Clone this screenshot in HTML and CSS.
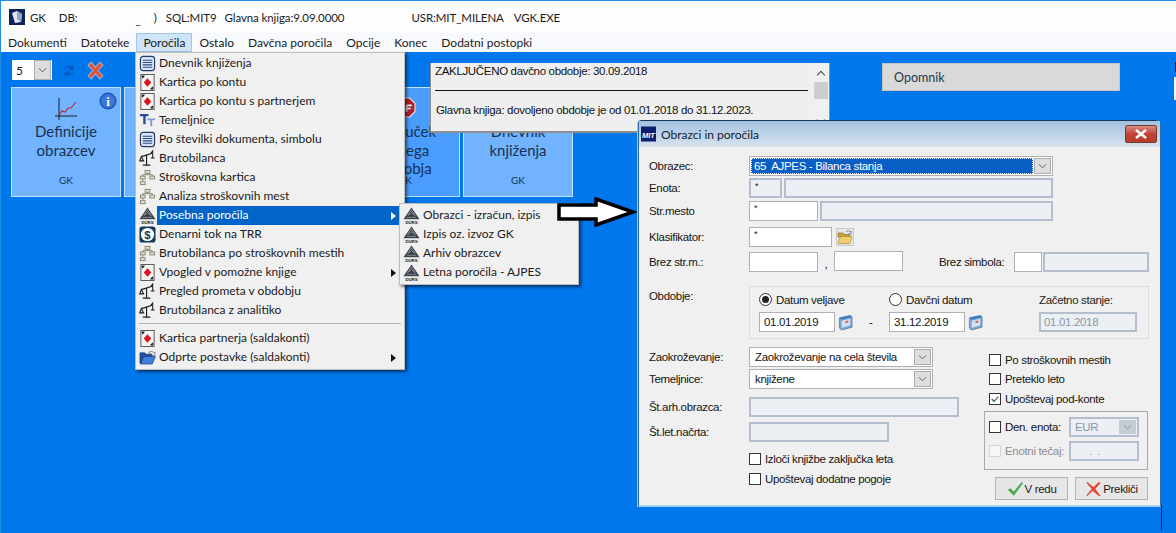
FILE: index.html
```html
<!DOCTYPE html>
<html lang="sl">
<head>
<meta charset="utf-8">
<title>GK</title>
<link rel="stylesheet" href="styles.css">
</head>
<body>
<svg class="defs" width="0" height="0" aria-hidden="true">
  <symbol id="i-list" viewBox="0 0 18 18">
    <rect x="1.5" y="1.5" width="15" height="15" rx="3" fill="#d8e4f4" stroke="#243a66" stroke-width="1.2"/>
    <path d="M4 5.5h10M4 8h10M4 10.5h10M4 13h10" stroke="#2a4b86" stroke-width="1.2"/>
  </symbol>
  <symbol id="i-card" viewBox="0 0 18 18">
    <rect x="2" y="0.5" width="14" height="17" fill="#f4f4f0" stroke="#555"/>
    <path d="M9 4.5l4 4.5-4 4.5-4-4.5z" fill="#e01020"/>
    <path d="M3 1.5h3v1L4 4.5H3zM15 16.500h-3v-1l2-2h1z" fill="#222"/>
  </symbol>
  <symbol id="i-tt" viewBox="0 0 18 18">
    <path d="M1 2h9v2.500H7V13H4.500V4.500H1z" fill="#2b4a9a"/>
    <path d="M9 7h8v1.800h-3V15h-2V8.800H9z" fill="#7d9cd0"/>
  </symbol>
  <symbol id="i-scale" viewBox="0 0 18 18">
    <path d="M4 16h8M8 16V5M2.500 7L14 3.500M2.500 7L0.800 11.500h4L2.500 7z" fill="none" stroke="#1c1c1c" stroke-width="1.200"/>
    <path d="M12.500 3.500L14.500 1v7M12.500 8.500h4" fill="none" stroke="#1c1c1c" stroke-width="1.100"/>
  </symbol>
  <symbol id="i-tree" viewBox="0 0 18 18">
    <g fill="#e6e6d6" stroke="#85856e">
      <rect x="6.500" y="1.500" width="5" height="3"/>
      <rect x="11.500" y="7.500" width="5" height="3"/>
      <rect x="1.500" y="7.500" width="5" height="3"/>
      <rect x="1.500" y="13.500" width="5" height="3"/>
    </g>
    <path d="M9 4.500V6M4 6h10v1.500M4 6v1.500M4 10.500v3" fill="none" stroke="#85856e"/>
  </symbol>
  <symbol id="i-durs" viewBox="0 0 18 18">
    <path d="M9 0.500L17.500 13H.500z" fill="#3a4048"/>
    <path d="M9 3l-4 6 4-3 4 3zM4 11h10" fill="none" stroke="#9aa0a8" stroke-width=".8"/>
    <rect x="0" y="13.500" width="18" height="4.500" fill="#e8e8e8"/>
    <text x="9" y="17.600" text-anchor="middle" class="durs">DURS</text>
  </symbol>
  <symbol id="i-dollar" viewBox="0 0 18 18">
    <rect x="0.500" y="0.500" width="17" height="17" rx="3" fill="#173a5c"/>
    <circle cx="9" cy="9" r="7" fill="#fff"/>
    <text x="9" y="13.500" text-anchor="middle" class="dollar">$</text>
  </symbol>
  <symbol id="i-folder" viewBox="0 0 18 18">
    <path d="M1 4h5l1.500 1.500H14V8H5L2 15H1z" fill="#1f4f9e" stroke="#12285a" stroke-width=".6"/>
    <path d="M5 8h12.500L14 16H1.500z" fill="#3f7fe0" stroke="#12285a" stroke-width=".6"/>
    <path d="M10 4c2-2 4-2 6 0l1-1v4h-4l1-1c-1-1-2-1-4-2z" fill="#dfe8f4" stroke="#333" stroke-width=".5"/>
  </symbol>
  <symbol id="i-cal" viewBox="0 0 16 18">
    <path d="M1.500 4L13 1.500 15 3v11l-11 3-2.500-2z" fill="#7fa6d8" stroke="#45709f" stroke-width=".7"/>
    <path d="M4 7l9-2v7l-9 2.500z" fill="#d6e2f2"/>
    <path d="M8 7.500l3-.7v2.200l-3 .8z" fill="#d8605a"/>
    <path d="M1.500 4L13 1.500 15 3 4 6z" fill="#3f79bd"/>
  </symbol>
</svg>

<div class="app">
  <header class="titlebar">
    <svg class="app-icon" viewBox="0 0 16 16" aria-hidden="true">
      <rect width="16" height="16" fill="#10205a"/>
      <path d="M3 4l5-2 5 3-1 8-6 1z" fill="#dfe6ee"/>
      <path d="M8 2l5 3-1 8-4-3z" fill="#8fa6c0"/>
    </svg>
    <span class="t-gk">GK</span>
    <span class="t-db">DB:</span>
    <span class="t-mask">_</span>
    <span class="t-par">)</span>
    <span class="t-sql">SQL:MIT9</span>
    <span class="t-gl">Glavna knjiga:9.09.0000</span>
    <span class="t-usr">USR:MIT_MILENA</span>
    <span class="t-exe">VGK.EXE</span>
  </header>
  <nav class="menubar">
    <span class="mb m1">Dokumenti</span>
    <span class="mb m2">Datoteke</span>
    <span class="mb m3 active">Poročila</span>
    <span class="mb m4">Ostalo</span>
    <span class="mb m5">Davčna poročila</span>
    <span class="mb m6">Opcije</span>
    <span class="mb m7">Konec</span>
    <span class="mb m8">Dodatni postopki</span>
  </nav>

  <main class="desktop">
    <div class="toolbar">
      <div class="tb-select"><span>5</span><span class="chev-btn"><svg viewBox="0 0 10 6"><path d="M1 1l4 4 4-4" fill="none" stroke="#555" stroke-width="1.100"/></svg></span></div>
      <svg class="tb-refresh" viewBox="0 0 16 18" aria-hidden="true">
        <path d="M3 8c0-4 4-6 8-4l2-2v6H7l2-2C7 5 5 6 3 8zM13 10c0 4-4 6-8 4l-2 2v-6h6l-2 2c2 1 4 0 6-2z" fill="#0d50b8"/>
      </svg>
      <svg class="tb-x" viewBox="0 0 16 18" aria-hidden="true">
        <path d="M1 4l3-3 4 5 4-5 3 3-4.500 5L15 14l-3 3-4-5-4 5-3-3 4.500-5z" fill="#e0503c" stroke="#a8b0b8"/>
      </svg>
    </div>
    <div class="tiles">
      <div class="tile">
        <svg class="t-chart" viewBox="0 0 24 24" aria-hidden="true">
          <path d="M4 1v22M0 19h22" stroke="#1c1c1c" fill="none"/>
          <path d="M4 18l3-4 3 1 3-4 3 0 5-6" stroke="#c0202a" stroke-width="1.100" fill="none"/>
        </svg>
        <svg class="t-info" viewBox="0 0 18 18" aria-hidden="true">
          <circle cx="9" cy="9" r="8.500" fill="#1f55b8"/>
          <circle cx="9" cy="9" r="7" fill="#3a78d8"/>
          <text x="9" y="14" text-anchor="middle" class="info">i</text>
        </svg>
        <p class="t-name">Definicije<br>obrazcev</p>
        <p class="t-tag">GK</p>
      </div>
      <div class="tile"><p class="t-name">Pregled<br>knjiženj</p><p class="t-tag">GK</p></div>
      <div class="tile"><p class="t-name">Izpis<br>kartic</p><p class="t-tag">GK</p></div>
      <div class="tile deep">
        <svg class="t-stop" viewBox="0 0 20 20" aria-hidden="true">
          <path d="M6 1h8l5 5v8l-5 5H6l-5-5V6z" fill="#b0202c" stroke="#e8e8e8"/>
          <path d="M11 8h5M11 8v6M11 11h4" stroke="#f4f4f4" stroke-width="1.500" fill="none"/>
        </svg>
        <p class="t-name">Zaključek<br>letnega<br>obdobja</p>
        <p class="t-tag">GK</p>
      </div>
      <div class="tile"><p class="t-name">Dnevnik<br>knjiženja</p><p class="t-tag">GK</p></div>
    </div>

    <div class="note">
      <p class="n1">ZAKLJUČENO davčno obdobje: 30.09.2018</p>
      <hr class="n-line">
      <p class="n2">Glavna knjiga: dovoljeno obdobje je od 01.01.2018 do 31.12.2023.</p>
      <div class="n-scroll"><span class="n-up"></span><span class="n-thumb"></span><span class="n-down"></span></div>
    </div>

    <div class="opomnik">Opomnik</div>
    <div class="edge-mark"></div>
    <div class="edge-box"></div>

    <div class="menu">
      <div class="mi"><svg class="ic"><use href="#i-list"/></svg>Dnevnik knjiženja</div>
      <div class="mi"><svg class="ic"><use href="#i-card"/></svg>Kartica po kontu</div>
      <div class="mi"><svg class="ic"><use href="#i-card"/></svg>Kartica po kontu s partnerjem</div>
      <div class="mi"><svg class="ic"><use href="#i-tt"/></svg>Temeljnice</div>
      <div class="mi"><svg class="ic"><use href="#i-list"/></svg>Po številki dokumenta, simbolu</div>
      <div class="mi"><svg class="ic"><use href="#i-scale"/></svg>Brutobilanca</div>
      <div class="mi"><svg class="ic"><use href="#i-tree"/></svg>Stroškovna kartica</div>
      <div class="mi"><svg class="ic"><use href="#i-tree"/></svg>Analiza stroškovnih mest</div>
      <div class="mi sel"><svg class="ic"><use href="#i-durs"/></svg><span class="mi-txt">Posebna poročila</span><i class="sub-arrow"></i></div>
      <div class="mi"><svg class="ic"><use href="#i-dollar"/></svg>Denarni tok na TRR</div>
      <div class="mi"><svg class="ic"><use href="#i-tree"/></svg>Brutobilanca po stroškovnih mestih</div>
      <div class="mi"><svg class="ic"><use href="#i-card"/></svg><span class="mi-txt">Vpogled v pomožne knjige</span><i class="sub-arrow dark"></i></div>
      <div class="mi"><svg class="ic"><use href="#i-scale"/></svg>Pregled prometa v obdobju</div>
      <div class="mi"><svg class="ic"><use href="#i-scale"/></svg>Brutobilanca z analitiko</div>
      <div class="mi-sep"></div>
      <div class="mi"><svg class="ic"><use href="#i-card"/></svg>Kartica partnerja (saldakonti)</div>
      <div class="mi"><svg class="ic"><use href="#i-folder"/></svg><span class="mi-txt">Odprte postavke (saldakonti)</span><i class="sub-arrow dark"></i></div>
    </div>

    <div class="submenu">
      <div class="mi"><svg class="ic"><use href="#i-durs"/></svg>Obrazci - izračun, izpis</div>
      <div class="mi"><svg class="ic"><use href="#i-durs"/></svg>Izpis oz. izvoz GK</div>
      <div class="mi"><svg class="ic"><use href="#i-durs"/></svg>Arhiv obrazcev</div>
      <div class="mi"><svg class="ic"><use href="#i-durs"/></svg>Letna poročila - AJPES</div>
    </div>

    <svg class="big-arrow" viewBox="0 0 80 30" aria-hidden="true">
      <path d="M2 8H39V2L76 15 39 28V22H2z" fill="#fff" stroke="#000" stroke-width="3.500" stroke-linejoin="miter"/>
    </svg>

    <div class="black-line"></div>

    <section class="dialog">
      <div class="dlg-title">
        <svg class="dlg-logo" viewBox="0 0 16 16" aria-hidden="true">
          <rect width="16" height="16" fill="#0a1f6e"/>
          <text x="8" y="12" text-anchor="middle" class="mit">MIT</text>
        </svg>
        <span class="dlg-name">Obrazci in poročila</span>
        <span class="dlg-close"><svg viewBox="0 0 12 10"><path d="M1 1l10 8M11 1L1 9" stroke="#fff" stroke-width="2.600"/></svg></span>
      </div>
      <div class="form">
        <div class="row r-obrazec">
          <label class="lbl">Obrazec:</label>
          <div class="fld sel-fld w-304"><span class="picked"><span>65&nbsp; AJPES - Bilanca stanja</span></span><span class="chev-btn"><svg viewBox="0 0 10 6"><path d="M1 1l4 4 4-4" fill="none" stroke="#666" stroke-width="1.100"/></svg></span></div>
        </div>
        <div class="row r-enota">
          <label class="lbl">Enota:</label>
          <div class="fld off w-33 tiny">*</div>
          <div class="fld off grow"></div>
        </div>
        <div class="row r-str">
          <label class="lbl">Str.mesto</label>
          <div class="fld w-69 tiny">*</div>
          <div class="fld off grow"></div>
        </div>
        <div class="row r-klas">
          <label class="lbl">Klasifikator:</label>
          <div class="fld w-83 tiny">*</div>
          <span class="folder-btn"><svg viewBox="0 0 16 16"><path d="M1 4h5l1 1.500h6V8H1z" fill="#caa243" stroke="#8a6a20" stroke-width=".6"/><path d="M3.500 7.500H15L13 14.500H1z" fill="#f2cf6e" stroke="#a3802a" stroke-width=".6"/><path d="M9 3c2-2 3-1.500 4 0l1-1v3h-3" fill="none" stroke="#5577a0" stroke-width=".8"/></svg></span>
        </div>
        <div class="row r-brez">
          <label class="lbl">Brez str.m.:</label>
          <div class="fld w-69"></div>
          <span class="comma">,</span>
          <div class="fld w-69 up1"></div>
          <label class="lbl-simb">Brez simbola:</label>
          <div class="fld w-28"></div>
          <div class="fld off w-106"></div>
        </div>
        <div class="row r-obd">
          <label class="lbl lbl-obd">Obdobje:</label>
          <div class="period">
            <div class="opt"><span class="radio on"></span>Datum veljave</div>
            <div class="opt"><span class="radio"></span>Davčni datum</div>
            <div class="opt plain">Začetno stanje:</div>
            <div class="date-wrap"><div class="fld date">01.01.2019</div><svg class="cal"><use href="#i-cal"/></svg><span class="dash">-</span></div>
            <div class="date-wrap"><div class="fld date">31.12.2019</div><svg class="cal"><use href="#i-cal"/></svg></div>
            <div class="fld off date-off">01.01.2018</div>
          </div>
        </div>
        <div class="lower">
          <div class="lower-left">
            <div class="row">
              <label class="lbl">Zaokroževanje:</label>
              <div class="fld sel-fld w-184"><span class="val">Zaokroževanje na cela števila</span><span class="chev-btn"><svg viewBox="0 0 10 6"><path d="M1 1l4 4 4-4" fill="none" stroke="#666" stroke-width="1.100"/></svg></span></div>
            </div>
            <div class="row r-tem">
              <label class="lbl">Temeljnice:</label>
              <div class="fld sel-fld w-184"><span class="val">knjižene</span><span class="chev-btn"><svg viewBox="0 0 10 6"><path d="M1 1l4 4 4-4" fill="none" stroke="#666" stroke-width="1.100"/></svg></span></div>
            </div>
            <div class="row r-arh">
              <label class="lbl">Št.arh.obrazca:</label>
              <div class="fld off w-210"></div>
            </div>
            <div class="row r-let">
              <label class="lbl">Št.let.načrta:</label>
              <div class="fld off w-140"></div>
            </div>
            <div class="chk c-izl"><span class="box"></span>Izloči knjižbe zaključka leta</div>
            <div class="chk c-upo"><span class="box"></span>Upoštevaj dodatne pogoje</div>
          </div>
          <div class="lower-right">
            <div class="chk c1"><span class="box"></span>Po stroškovnih mestih</div>
            <div class="chk c2"><span class="box"></span>Preteklo leto</div>
            <div class="chk c3"><span class="box"><svg viewBox="0 0 12 12"><path d="M2 6l3 3 5-6" fill="none" stroke="#444" stroke-width="1.300"/></svg></span>Upoštevaj pod-konte</div>
            <div class="cur-group">
              <div class="cur-row">
                <div class="chk"><span class="box"></span>Den. enota:</div>
                <div class="fld off sel-fld w-70"><span class="val dim">EUR</span><span class="chev-btn gray"><svg viewBox="0 0 10 6"><path d="M1 1l4 4 4-4" fill="none" stroke="#9aa" stroke-width="1.300"/></svg></span></div>
              </div>
              <div class="cur-row r2">
                <div class="chk dis"><span class="box"></span>Enotni tečaj:</div>
                <div class="fld off w-70 dots">.&nbsp;&nbsp;.</div>
              </div>
            </div>
            <div class="btns">
              <button class="btn" type="button"><svg viewBox="0 0 20 18"><path d="M1 10l3-2 4 4L17 1l2 1L8 17z" fill="#49a84a"/></svg>V redu</button>
              <button class="btn" type="button"><svg viewBox="0 0 18 18"><path d="M2 1l7 6 6-6 2 1-6 7 6 8-2 0-7-6-6 6-1-1 6-7-6-7z" fill="#e84030"/></svg>Prekliči</button>
            </div>
          </div>
        </div>
      </div>
    </section>
  </main>
</div>
</body>
</html>
```
FILE: styles.css
```css
* { box-sizing: border-box; }
html, body { margin: 0; padding: 0; }
body {
  width: 1176px;
  height: 533px;
  overflow: hidden;
  font-family: Lato, "Noto Sans", sans-serif;
  font-size: 12px;
  color: #1b1b1b;
  background: #0177ee;
}
p { margin: 0; }
.defs { position: absolute; }
.app { display: flex; flex-direction: column; height: 533px; border-top: 1px solid #1f8fe6; border-left: 1px solid #1f8fe6; }

.titlebar { display: flex; align-items: center; height: 32px; background: #fdfdfd; flex: none; font-size: 11.500px; letter-spacing: -.1px; }
.app-icon { width: 16px; height: 16px; margin-left: 8px; }
.t-gk { margin-left: 5px; }
.t-db { margin-left: 13px; }
.t-mask { margin-left: 58px; margin-top: 4px; }
.t-par { margin-left: 13px; }
.t-sql { margin-left: 9px; }
.t-gl { margin-left: 8px; }
.t-usr { margin-left: 67px; }
.t-exe { margin-left: 10px; }

.menubar { display: flex; height: 19px; background: #f7f9fc; flex: none; align-items: center; padding-left: 7px; }
.mb { margin-right: 14px; line-height: 19px; }
.mb.active { background: #cfe4f7; box-shadow: inset 0 0 0 1px #9cc8ec; padding: 0 7px; margin: 0 7px 0 -7px; }

.desktop { position: relative; flex: 1; background: #0177ee; }
.toolbar { display: flex; align-items: center; height: 20px; margin: 8px 0 0 11px; }
.tb-select { width: 40px; height: 20px; background: #fff; display: flex; align-items: center; justify-content: space-between; padding: 0 1px 0 4px; }
.chev-btn { display: flex; align-items: center; justify-content: center; width: 17px; height: 100%; background: #dedede; border: 1px solid #adadad; flex: none; }
.chev-btn svg { width: 9px; height: 6px; }
.tb-refresh { width: 14px; height: 17px; margin-left: 10px; opacity: .75; }
.tb-x { width: 17px; height: 19px; margin-left: 11px; }

.tiles { display: flex; gap: 3px; margin: 7px 0 0 10px; }
.tile { position: relative; width: 110px; height: 110px; background: #72b3ff; border: 1px solid #c6e0ff; text-align: center; color: #17314f; flex: none; }
.tile.deep { background: #4a9dff; }
.t-name { position: absolute; left: 0; right: 0; top: 34px; font-size: 15px; line-height: 18.500px; }
.t-tag { position: absolute; left: 0; right: 0; top: 86px; font-size: 10px; line-height: 13px; }
.t-chart { position: absolute; left: 43px; top: 9px; width: 24px; height: 24px; }
.t-info { position: absolute; left: 87px; top: 4px; width: 18px; height: 18px; }
.t-stop { position: absolute; left: 44px; top: 9px; width: 21px; height: 21px; }
.info { font: bold 13px "Liberation Serif", serif; fill: #fff; }

.note { position: absolute; left: 430px; top: 11px; width: 398px; height: 68px; background: #efefef; box-shadow: 0 1px 0 1px #8e8e8e; font-family: "Liberation Sans", sans-serif; font-size: 11.500px; letter-spacing: -.33px; color: #111; }
.n1 { position: absolute; left: 4px; top: 2px; }
.n-line { position: absolute; left: 4px; width: 373px; top: 27px; margin: 0; border: 0; border-top: 1px solid #111; }
.n2 { position: absolute; left: 5px; top: 41px; }
.n-scroll { position: absolute; right: 0; top: 0; bottom: 0; width: 16px; background: #f0f0f0; }
.n-thumb { position: absolute; left: 1px; right: 1px; top: 19px; height: 17px; background: #cdcdcd; }
.n-up, .n-down { position: absolute; left: 5px; width: 6px; height: 6px; border-left: 1px solid #444; border-top: 1px solid #444; transform: rotate(45deg); top: 9px; }
.n-down { top: 54px; transform: rotate(225deg); }

.opomnik { position: absolute; left: 881px; top: 11px; width: 238px; height: 28px; background: #d9d9d9; border: 1px solid #c4c4c4; padding: 6px 0 0 11px; color: #26384a; font-size: 12.500px; }
.edge-mark { position: absolute; left: 1174px; top: 10px; width: 1px; height: 10px; background: #1a2230; }
.edge-box { position: absolute; left: 1173px; top: 25px; width: 2px; height: 23px; background: #f4f4f4; }

.menu { position: absolute; left: 134px; top: 0; width: 270px; height: 318px; background: #f0f0f0; border: 1px solid #bcbcbc; padding-top: 1px; box-shadow: 2px 2px 3px rgba(0,0,0,.55); }
.submenu { position: absolute; left: 398px; top: 151px; width: 180px; height: 82px; background: #f0f0f0; border: 1px solid #bcbcbc; padding-top: 2px; box-shadow: 2px 2px 3px rgba(0,0,0,.55); }
.mi { position: relative; display: flex; align-items: center; height: 19px; padding: 0 0 2px 23px; white-space: nowrap; }
.ic { position: absolute; left: 3px; top: 1px; width: 17px; height: 17px; }
.mi.sel { color: #fff; }
.mi.sel::before { content: ""; position: absolute; left: 21px; right: 1px; top: 0; bottom: 0; background: #0064c8; }
.mi-txt { position: relative; }
.sub-arrow { position: absolute; right: 8px; top: 6px; width: 0; height: 0; border-left: 5px solid #fff; border-top: 4px solid transparent; border-bottom: 4px solid transparent; }
.sub-arrow.dark { border-left-color: #111; }
.mi-sep { height: 9px; position: relative; }
.mi-sep::after { content: ""; position: absolute; left: 3px; right: 3px; top: 3px; border-top: 1px solid #b4b4b4; }
.durs { font: bold 4.500px "Liberation Sans", sans-serif; fill: #222; }
.dollar { font: bold 12px "Liberation Sans", sans-serif; fill: #173a5c; }
.mit { font: bold italic 8px "Liberation Sans", sans-serif; fill: #fff; }

.big-arrow { position: absolute; left: 556px; top: 145px; width: 80px; height: 30px; }
.black-line { position: absolute; left: 1160px; top: 453px; width: 1px; height: 25px; background: #14202c; }

.dialog { position: absolute; left: 637px; top: 68px; width: 523px; height: 387px; background: #f0f0f0; border: 1px solid #2a6aa8; border-top-color: #14385c; border-radius: 4px 6px 0 0; border-bottom: 2px solid #a8d0ec; box-shadow: -1px 0 0 #a8c4dc; font-family: "Liberation Sans", sans-serif; font-size: 11.500px; letter-spacing: -.33px; color: #151515; }
.dlg-title { display: flex; align-items: center; height: 26px; background: linear-gradient(#a3c2e0, #d6e3ef); padding: 0 3px 0 2px; font-family: Lato, "Noto Sans", sans-serif; font-size: 12px; letter-spacing: 0; color: #14202c; }
.dlg-logo { width: 15px; height: 16px; }
.dlg-name { margin-left: 5px; }
.dlg-close { margin-left: auto; width: 32px; height: 18px; background: linear-gradient(#d88c80, #c04434 50%, #b83c2c); border: 1px solid #7c3a34; border-radius: 2px; display: flex; align-items: center; justify-content: center; }
.dlg-close svg { width: 12px; height: 10px; }

.form { padding: 9px 0 0 10px; }
.row { display: flex; align-items: center; height: 20px; }
.lbl { width: 100px; flex: none; }
.fld { height: 20px; background: #fff; border: 1px solid #b0b0b0; flex: none; display: flex; align-items: center; }
.fld.off { background: #ecf0f4; border: 2px solid #b3bfcf; }
.fld.grow { width: 233px; margin-left: 2px; }
.r-enota { margin-top: 2px; }
.r-enota .grow { width: 269px; }
.r-str { margin-top: 3px; }
.r-klas { margin-top: 6px; }
.r-brez { margin-top: 5px; }
.r-obd { margin-top: 14px; height: 53px; align-items: flex-start; }
.lbl-obd { margin-top: 4px; }
.w-304 { width: 304px; }
.w-33 { width: 33px; }
.w-69 { width: 69px; }
.w-83 { width: 83px; }
.w-28 { width: 28px; }
.w-106 { width: 106px; margin-left: 1px; }
.w-184 { width: 184px; }
.w-210 { width: 210px; }
.w-140 { width: 140px; }
.w-70 { width: 70px; }
.tiny { font-size: 9px; align-items: flex-start; padding: 1px 0 0 4px; }
.sel-fld { justify-content: space-between; padding: 1px; }
.picked { flex: 1; height: 100%; background: #0a5fc4; color: #fff; outline: 1px dotted #dfe8f4; outline-offset: -1px; padding-left: 3px; display: flex; align-items: center; margin-right: 1px; }
.val { padding-left: 4px; white-space: nowrap; }
.val.dim { color: #8a97a8; padding-left: 3px; }
.chev-btn.gray { background: #c6ccd4; border: 0; }
.folder-btn { width: 18px; height: 18px; margin-left: 4px; background: #e6e6e6; border: 1px solid #c9c9c9; }
.folder-btn svg { display: block; width: 16px; height: 16px; }
.comma { width: 16px; text-align: center; padding-top: 4px; }
.up1 { margin-top: -2px; }
.lbl-simb { margin-left: 36px; width: 75px; white-space: nowrap; }

.period { width: 400px; height: 53px; border: 1px solid #dcdcdc; display: grid; grid-template-columns: 130px 150px 1fr; grid-template-rows: 19px 20px; row-gap: 6px; padding: 0 0 0 9px; }
.opt { display: flex; align-items: center; gap: 4px; padding-top: 6px; white-space: nowrap; }
.radio { width: 13px; height: 13px; border: 1px solid #333; border-radius: 50%; background: #fff; display: block; position: relative; flex: none; }
.radio.on::after { content: ""; position: absolute; left: 2px; top: 2px; width: 7px; height: 7px; border-radius: 50%; background: #222; }
.plain { color: #222; }
.date-wrap { display: flex; align-items: center; }
.date { width: 76px; padding-left: 4px; }
.cal { width: 15px; height: 17px; margin-left: 3px; }
.dash { margin-left: 16px; }
.date-off { width: 98px; padding-left: 3px; color: #8a97a8; }

.lower { display: flex; margin-top: 8px; }
.lower-left { width: 335px; flex: none; }
.lower-right { width: 164px; flex: none; padding-top: 7px; }
.r-tem { margin-top: 2px; }
.r-arh { margin-top: 8px; }
.r-let { margin-top: 5px; }
.chk { display: flex; align-items: center; gap: 4px; height: 12px; white-space: nowrap; }
.box { display: block; width: 12px; height: 12px; border: 1px solid #333; background: #fff; flex: none; }
.box svg { display: block; width: 10px; height: 10px; }
.c-izl { margin: 11px 0 0 100px; }
.c-upo { margin: 8px 0 0 100px; }
.c1, .c2, .c3 { margin-left: 5px; }
.c2 { margin-top: 7px; }
.c3 { margin-top: 8px; }
.cur-group { margin-top: 6px; height: 59px; width: 164px; border: 1px solid #a8a8a8; padding: 4px 0 0 4px; }
.cur-row { display: flex; justify-content: space-between; align-items: center; padding-right: 8px; height: 21px; }
.cur-row.r2 { margin-top: 4px; height: 20px; }
.chk.dis { color: #8d8d8d; }
.chk.dis .box { border-color: #d4d4d4; background: #f6f6f6; }
.dots { color: #8a97a8; padding-left: 18px; }
.btns { display: flex; justify-content: flex-end; gap: 7px; margin-top: 7px; }
.btn { width: 73px; height: 23px; padding: 0; border: 1px solid #b2b2b2; background: #e6e6e6; font: inherit; letter-spacing: -.33px; color: #1a1a1a; display: flex; align-items: center; justify-content: center; gap: 1px; }
.btn svg { width: 17px; height: 16px; }
```
